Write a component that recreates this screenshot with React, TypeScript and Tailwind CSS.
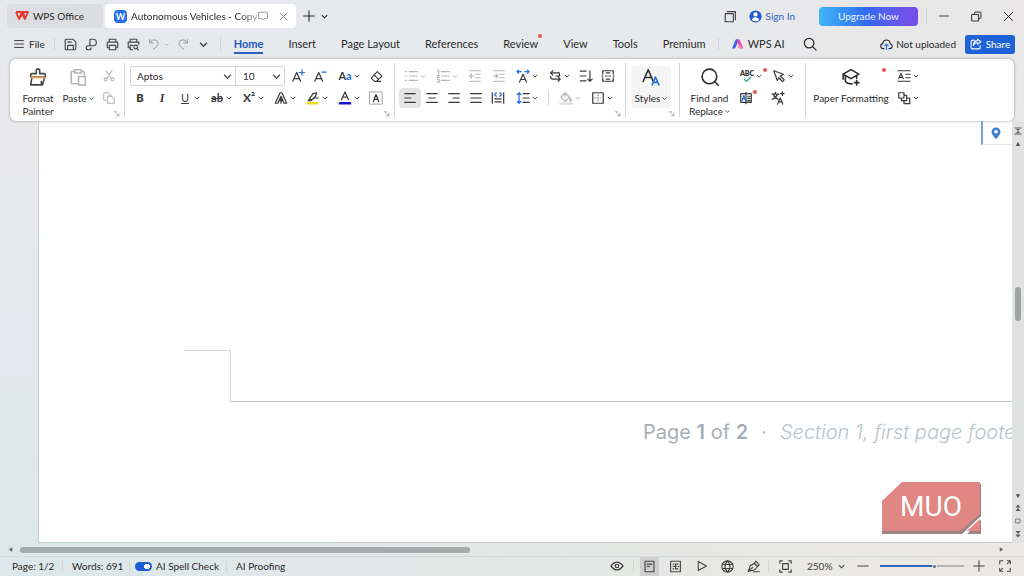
import type { ReactNode } from "react";
import { useState } from "react";

type GlyphProps = {
  d?: string;
  className?: string;
  children?: ReactNode;
};

// All toolbar drawings share a 16x16 grid.
function Glyph({ d, className = "size-[14px]", children }: GlyphProps) {
  return (
    <svg
      viewBox="0 0 16 16"
      aria-hidden="true"
      className={`shrink-0 ${className}`}
      fill="none"
      stroke="currentColor"
      strokeWidth="1.4"
      strokeLinecap="round"
      strokeLinejoin="round"
    >
      {d ? <path d={d} /> : null}
      {children}
    </svg>
  );
}

function Chevron({ className = "size-[6px]" }: { className?: string }) {
  return (
    <svg viewBox="0 0 8 8" aria-hidden="true" className={`shrink-0 ${className}`} fill="none" stroke="currentColor" strokeWidth="1.3">
      <path d="M1 2.5 4 5.5 7 2.5" />
    </svg>
  );
}

// Solid marks for the scroll bars.
function Arrow({ d, className = "size-[7px]" }: { d: string; className?: string }) {
  return (
    <svg viewBox="0 0 16 16" aria-hidden="true" className={`shrink-0 ${className}`} fill="currentColor">
      <path d={d} />
    </svg>
  );
}

type ToolProps = {
  label: string;
  drop?: boolean;
  active?: boolean;
  muted?: boolean;
  dot?: boolean;
  children: ReactNode;
};

function Tool({ label, drop, active, muted, dot, children }: ToolProps) {
  return (
    <button
      type="button"
      aria-label={label}
      aria-pressed={active}
      className={`relative flex h-5 shrink-0 items-center justify-center gap-[2px] rounded ${drop ? "w-8" : "w-[22px]"} ${active ? "bg-[#e4e4e4]" : ""} ${muted ? "text-[#b5b5b5]" : "text-[#3a3a3a]"}`}
    >
      {children}
      {drop ? <Chevron /> : null}
      {dot ? <RedDot className="right-0 top-[2px]" /> : null}
    </button>
  );
}

function RedDot({ className }: { className: string }) {
  return <span className={`absolute size-1 rounded-full bg-[#e8554d] ${className}`} />;
}

function Divider({ className = "h-3" }: { className?: string }) {
  return <span className={`w-px shrink-0 bg-[#d5d6d9] ${className}`} />;
}

function Launcher({ label }: { label: string }) {
  return (
    <button type="button" aria-label={label} className="absolute bottom-1 right-1 text-[#777]">
      <Glyph className="size-[6px]" d="M2 2 13 13M13 6V13H6M2 2H7" />
    </button>
  );
}

function TitleBar() {
  return (
    <header className="flex h-8 items-end justify-between pr-[10px]">
      <div className="flex h-7 items-stretch pl-[7px]">
        <button type="button" className="mb-1 flex w-24 items-center gap-1 rounded bg-[#dcdde1] pl-2">
          <svg viewBox="0 0 14 10" className="h-[10px] w-[14px]" fill="none" stroke="#e5392f" strokeWidth="1.8" strokeLinejoin="round" aria-hidden="true">
            <path d="M1 1H8L10 8 13 1H7L4 8 1 1" />
            <path d="M4 8 7 3 10 8" />
          </svg>
          WPS Office
        </button>
        <div className="ml-[2px] mb-1 flex w-[191px] items-center rounded bg-white pl-[9px]">
          <span className="flex size-[13px] shrink-0 items-center justify-center rounded-sm bg-[#2670ec] text-[9px] font-bold leading-none text-white">W</span>
          <span className="ml-1 whitespace-nowrap bg-linear-to-r from-[#222] from-85% to-[#aaa] bg-clip-text text-transparent">
            Autonomous Vehicles - Copy
          </span>
          <Glyph className="ml-auto size-[10px] text-[#8b8b8b]" d="M2 2H14Q15 2 15 3V11Q15 12 14 12H11L8 14 5 12H2Q1 12 1 11V3Q1 2 2 2Z" />
          <button type="button" aria-label="Close tab" className="ml-[10px] mr-[7px] text-[#8b8b8b]">
            <Glyph className="size-[11px]" d="M3 3 13 13M13 3 3 13" />
          </button>
        </div>
        <button type="button" aria-label="New tab" className="mb-1 ml-[3px] pl-1">
          <Glyph className="size-3" d="M8 1V15M1 8H15" />
        </button>
        <button type="button" aria-label="Tab list" className="mb-1 ml-[6px]">
          <Chevron className="size-[7px]" />
        </button>
      </div>
      <div className="flex h-8 items-center">
        <button type="button" aria-label="Windows" className="text-[#444]">
          <Glyph className="size-[13px]" d="M1.500 4.500H11.500V14.500H1.500ZM4 2H14V12" />
        </button>
        <button type="button" className="ml-3 flex items-center gap-1 text-[#2862bd]">
          <svg viewBox="0 0 16 16" className="size-[13px]" aria-hidden="true">
            <circle cx="8" cy="8" r="7.500" fill="#1f59d0" />
            <circle cx="8" cy="5.500" r="2.600" fill="white" />
            <path d="M3.500 12.500Q4 9 8 9T12.500 12.500Q8 15 3.500 12.500Z" fill="white" />
          </svg>
          Sign In
        </button>
        <button type="button" className="ml-6 h-[19px] w-[99px] rounded bg-linear-to-r from-[#41b4f8] via-[#3267ee] to-[#7b4bea] text-[#e9f2ff]">
          Upgrade Now
        </button>
        <Divider className="ml-2 h-4" />
        <button type="button" aria-label="Minimize" className="ml-3">
          <Glyph className="size-[10px]" d="M1 8H15" />
        </button>
        <button type="button" aria-label="Restore" className="ml-[22px]">
          <Glyph className="size-[11px]" d="M1.500 5H11V14.500H1.500ZM5 5V3Q5 1.500 6.500 1.500H13Q14.500 1.500 14.500 3V9Q14.500 11 13 11H11" />
        </button>
        <button type="button" aria-label="Close" className="ml-[21px]">
          <Glyph className="size-[11px]" d="M2 2 14 14M14 2 2 14" />
        </button>
      </div>
    </header>
  );
}

const MENU = ["Home", "Insert", "Page Layout", "References", "Review", "View", "Tools", "Premium"];

function MenuBar() {
  return (
    <nav className="flex h-[27px] items-center pl-[14px] pr-[9px] pb-[3px]">
      <button type="button" className="flex items-center gap-[5px]">
        <Glyph className="size-[10px]" d="M1 2.500H15M1 8H15M1 13.500H15" />
        File
      </button>
      <Divider className="ml-[9px] h-3" />
      <div className="ml-[9px] flex items-center gap-2 text-[#444]">
        <button type="button" aria-label="Save">
          <Glyph className="size-[13px]" d="M1.500 3Q1.500 1.500 3 1.500H11L14.500 5V13Q14.500 14.500 13 14.500H3Q1.500 14.500 1.500 13ZM4.500 14V9H11.500V14M4.500 5H9" />
        </button>
        <button type="button" aria-label="Export to PDF">
          <Glyph className="size-[13px]" d="M6 9V3Q6 1.500 7.500 1.500H10Q14 1.500 14 5.500T10 9.500H4Q1.500 9.500 1.500 12T4 14.500H5Q7.500 14.500 7.500 12" />
        </button>
        <button type="button" aria-label="Print">
          <Glyph className="size-[13px]" d="M4 5V1.500H12V5M4 12H2Q1.500 12 1.500 11V6Q1.500 5 2.500 5H13.500Q14.500 5 14.500 6V11Q14.500 12 13.500 12H12M4 9H12V14.500H4Z" />
        </button>
        <button type="button" aria-label="Print preview">
          <Glyph className="size-[13px]" d="M4 5V1.500H12V5M4 12H1.500V5H14.500V8M4 9V14.500H7M4 9H7M14 14.500 12.500 13M13 11A2.300 2.300 0 1 1 8.400 11 2.300 2.300 0 0 1 13 11" />
        </button>
        <button type="button" aria-label="Undo" className="flex items-center gap-1 text-[#a6a8ac]">
          <Glyph className="size-3" d="M2 2V6.500H7M2 6.500Q5 2 9 2.500 14 3.500 13 8.500 12 12 7 15" />
          <Chevron className="size-[5px]" />
        </button>
        <button type="button" aria-label="Redo" className="text-[#a6a8ac]">
          <Glyph className="size-3" d="M14 2V6.500H9M14 6.500Q11 2 7 2.500 2 3.500 3 8.500 4 12 9 15" />
        </button>
        <button type="button" aria-label="More quick actions" className="ml-[2px]">
          <Chevron className="size-[9px]" />
        </button>
      </div>
      <Divider className="ml-3 h-4" />
      <div className="ml-[13px] flex gap-[25px] text-[11px]">
        {MENU.map((item) => (
          <button
            key={item}
            type="button"
            className={`relative h-5 whitespace-nowrap ${item === "Home" ? "border-b-2 border-[#2862c4] pt-[2px] font-bold text-[#2058c0]" : ""}`}
          >
            {item}
            {item === "Review" ? <RedDot className="-right-1 top-0" /> : null}
          </button>
        ))}
      </div>
      <Divider className="ml-3 h-3" />
      <button type="button" className="ml-[13px] flex items-center gap-1 whitespace-nowrap text-[11px]">
        <svg viewBox="0 0 12 10" className="h-[10px] w-3" aria-hidden="true">
          <path d="M0 9.500 3.500 1Q4 0 5.500 .5H7L3 9.500Z" fill="#3a5cf0" />
          <path d="M5.500 .5H7.500L11.500 9.500H9L5 3Z" fill="#e64ca5" />
          <path d="M5 6.500H9L10 9.500H7Z" fill="#f98bb8" />
        </svg>
        WPS AI
      </button>
      <button type="button" aria-label="Search" className="ml-[18px]">
        <Glyph className="size-[14px]" d="M12.500 7A5.500 5.500 0 1 1 1.500 7 5.500 5.500 0 0 1 12.500 7M11 11 15 15" />
      </button>
      <div className="ml-auto flex items-center gap-[9px]">
        <button type="button" className="flex items-center gap-[3px] whitespace-nowrap">
          <Glyph className="size-[13px]" d="M5 13H4Q1 13 1 10T3.500 7Q4 2.500 8 2.500T12.500 7Q15 7.500 15 10T12 13H11">
            <path d="M8 14V7.500M6 9.500 8 7.500 10 9.500" stroke="#2670ec" />
          </Glyph>
          Not uploaded
        </button>
        <button type="button" className="flex h-[19px] w-[50px] items-center justify-center gap-1 rounded-[3px] bg-[#1d62d6] text-white">
          <Glyph className="size-3" d="M6 3H3Q1.500 3 1.500 4.500V13Q1.500 14.500 3 14.500H12Q13.500 14.500 13.500 13V10M10 1.500 14.500 5 10 8.500V6.500Q6 6 4.500 10 4.500 4 10 3.500Z" />
          Share
        </button>
      </div>
    </nav>
  );
}

const LINES_LEFT = "M2 3H14M2 8H9M2 13H14";
const LINES_CENTER = "M2 3H14M4.500 8H11.500M2 13H14";
const LINES_RIGHT = "M2 3H14M7 8H14M2 13H14";
const LINES_JUSTIFY = "M2 3H14M2 8H14M2 13H14";

function ClipboardGroup() {
  return (
    <section aria-label="Clipboard" className="relative flex w-[114px] shrink-0 pl-2 pt-[7px]">
      <button type="button" className="flex w-10 flex-col items-center pt-[2px] leading-[13px]">
        <Glyph className="mb-[6px] size-[18px] text-[#444]" d="M6.500 5V2Q6.500 1 7.500 1H8.500Q9.500 1 9.500 2V5H13.500Q14.500 5 14.500 6V8H1.500V6Q1.500 5 2.500 5ZM2.500 9 1.500 15H12L13.500 9.500M11 15V12">
          <path d="M2 8.300H14" stroke="#ee9a45" />
        </Glyph>
        Format Painter
      </button>
      <button type="button" className="flex w-10 flex-col items-center pt-[2px] leading-[13px]">
        <Glyph className="mb-[6px] size-[18px] text-[#b5b5b5]" d="M5 3H3Q2 3 2 4V13Q2 14 3 14H7M11 3H12.500Q13.500 3 13.500 4V6M5 1.500H11V4.500H5ZM8.500 7.500H14.500V15H8.500Z" />
        <span className="flex items-center gap-[2px]">
          Paste
          <Chevron className="size-[5px]" />
        </span>
      </button>
      <div className="flex flex-col gap-[2px]">
        <Tool label="Cut" muted>
          <Glyph className="size-3" d="M4 1 11 11M12 1 5 11M5.500 12.500A2 2 0 1 1 1.500 12.500 2 2 0 0 1 5.500 12.500M14.500 12.500A2 2 0 1 1 10.500 12.500 2 2 0 0 1 14.500 12.500" />
        </Tool>
        <Tool label="Copy" muted>
          <Glyph className="size-3" d="M5 11H2Q1 11 1 10V2Q1 1 2 1H7L10 4V5M6 5.500H11.500L15 9V15H6Z" />
        </Tool>
      </div>
      <Launcher label="Clipboard settings" />
    </section>
  );
}

function FontGroup() {
  return (
    <section aria-label="Font" className="relative flex w-[269px] shrink-0 flex-col gap-[2px] pt-[7px]">
      <div className="flex items-center pl-[5px]">
        <label className="relative flex items-center">
          <span className="sr-only">Font name</span>
          <select className="h-5 w-[106px] appearance-none rounded-l-[3px] border border-[#d4d4d4] bg-white pl-[6px]">
            <option>Aptos</option>
          </select>
          <Chevron className="pointer-events-none absolute right-1 size-[9px] text-[#555]" />
        </label>
        <label className="relative -ml-px flex items-center">
          <span className="sr-only">Font size</span>
          <select className="h-5 w-[50px] appearance-none rounded-r-[3px] border border-[#d4d4d4] bg-white pl-[7px]">
            <option>10</option>
          </select>
          <Chevron className="pointer-events-none absolute right-1 size-[9px] text-[#555]" />
        </label>
        <span className="w-[2px]" />
        <Tool label="Increase font size">
          <Glyph d="M2 14 6.500 4 11 14M3.500 11H9.500">
            <path d="M12.500 1V7M9.500 4H15.500" stroke="#2670d8" />
          </Glyph>
        </Tool>
        <Tool label="Decrease font size">
          <Glyph d="M2 14 6.500 4 11 14M3.500 11H9.500">
            <path d="M10 3.500H15" stroke="#2670d8" />
          </Glyph>
        </Tool>
        <span className="w-[2px]" />
        <Tool label="Change case" drop>
          <span className="text-[11px] font-bold">
            A<span className="text-[#2670d8]">a</span>
          </span>
        </Tool>
        <Tool label="Clear formatting">
          <Glyph className="size-[13px]" d="M9 2 14.500 7.500 8 14H5.500L1.500 10ZM5 6 10.500 11.500M5.500 14H13" />
        </Tool>
      </div>
      <div className="flex items-center pl-1">
        <Tool label="Bold">
          <span className="text-[11px] font-extrabold">B</span>
        </Tool>
        <Tool label="Italic">
          <span className="font-['Liberation_Serif',serif] text-[12px] font-bold italic">I</span>
        </Tool>
        <Tool label="Underline" drop>
          <span className="w-[14px] text-[11px] underline">U</span>
        </Tool>
        <Tool label="Strikethrough" drop>
          <span className="w-[14px] text-[11px] font-bold line-through">ab</span>
        </Tool>
        <Tool label="Superscript" drop>
          <span className="w-[14px] text-[12px] font-bold leading-none">X²</span>
        </Tool>
        <Tool label="Text effects" drop>
          <Glyph d="M1.500 14 7 2H9L14.500 14H11.500L8 6 4.500 14ZM6 11H10M8 7V14" />
        </Tool>
        <Tool label="Highlight color" drop>
          <Glyph d="M4 9 8 3 12 2 11 6 7 10ZM4 9 2.500 11H6L7 9.500M9 8H14">
            <path d="M1 14H14" stroke="#e6de1c" strokeWidth="3" strokeLinecap="butt" />
          </Glyph>
        </Tool>
        <Tool label="Font color" drop>
          <Glyph d="M4 10 8 1 12 10M5.500 7H10.500">
            <path d="M1 14H15" stroke="#1414d2" strokeWidth="3" strokeLinecap="butt" />
          </Glyph>
        </Tool>
        <Tool label="Character border">
          <Glyph d="M5 12 8 4 11 12M6 9.500H10">
            <path d="M1 1H15V15H1Z" stroke="#999" strokeWidth="1" />
          </Glyph>
        </Tool>
      </div>
      <Launcher label="Font settings" />
    </section>
  );
}

function ParagraphGroup() {
  return (
    <section aria-label="Paragraph" className="relative flex w-[230px] shrink-0 flex-col gap-[2px] pl-1 pt-[7px]">
      <div className="flex items-center">
        <Tool label="Bullets" drop muted>
          <Glyph d="M2 3H3M2 8H3M2 13H3M6 3H15M6 8H15M6 13H15" />
        </Tool>
        <Tool label="Numbering" drop muted>
          <Glyph d="M2 1.500H3V5M1.500 7H3.500L1.500 9.500H3.500M1.500 12H3.500V15H1.500M6 3H15M6 8H15M6 13H15" />
        </Tool>
        <div className="flex w-12 justify-around">
          <Tool label="Decrease indent" muted>
            <Glyph d="M2 2H14M9 6H14M9 10H14M2 14H14M7 8H2M4 6 2 8 4 10" />
          </Tool>
          <Tool label="Increase indent" muted>
            <Glyph d="M2 2H14M9 6H14M9 10H14M2 14H14M1.500 8H6.500M4.500 6 6.500 8 4.500 10" />
          </Tool>
        </div>
        <Tool label="Character scaling" drop>
          <Glyph d="M4 15 8 6 12 15M5.500 12H10.500">
            <path d="M1 3H6M10 3H15M3 1 1 3 3 5M13 1 15 3 13 5" stroke="#2670d8" />
          </Glyph>
        </Tool>
        <Tool label="Text direction" drop>
          <Glyph d="M13 4.500H3M5.500 2 3 4.500 5.500 7M3 8.500Q3 11.500 6 11.500H14M11.500 9 14 11.500 11.500 14M13 4.500V8H9" />
        </Tool>
        <Tool label="Sort">
          <Glyph d="M1.500 2.500H8M1.500 8H8M1.500 13.500H8M12.500 2V14M10 11.500 12.500 14 15 11.500" />
        </Tool>
        <Tool label="Show marks">
          <Glyph d="M2 6V2H14V6M2 10V14H14V10M1 8H2M5 8H7M9 8H11M14 8H15M6 4.500H10M6 11.500H10" />
        </Tool>
      </div>
      <div className="flex items-center">
        <Tool label="Align left" active>
          <Glyph d={LINES_LEFT} />
        </Tool>
        <Tool label="Align center">
          <Glyph d={LINES_CENTER} />
        </Tool>
        <Tool label="Align right">
          <Glyph d={LINES_RIGHT} />
        </Tool>
        <Tool label="Justify">
          <Glyph d={LINES_JUSTIFY} />
        </Tool>
        <Tool label="Distribute">
          <Glyph d="M1.500 2V14M14.500 2V14M4.500 9H11.500M4.500 12.500H11.500">
            <path d="M6 2 4 4 6 6M10 2 12 4 10 6" stroke="#2670d8" />
          </Glyph>
        </Tool>
        <span className="w-[2px]" />
        <Tool label="Line spacing" drop>
          <Glyph d="M8 3H15M8 8H15M8 13H15">
            <path d="M3.500 2V14M1.500 4 3.500 2 5.500 4M1.500 12 3.500 14 5.500 12" stroke="#2670d8" />
          </Glyph>
        </Tool>
        <Divider className="mx-[5px] h-4" />
        <Tool label="Shading" drop muted>
          <Glyph d="M7 2 12 7 7 12 2 7ZM7 2V6M13 8Q15 11 13.500 11.500T13 8">
            <path d="M1.500 14.500H14.500" stroke="#dedede" strokeWidth="2.500" />
          </Glyph>
        </Tool>
        <Tool label="Borders" drop>
          <Glyph d="M2 2H14V14H2Z">
            <path d="M8 4V12M4 8H12" stroke="#999" strokeDasharray="1 2" />
          </Glyph>
        </Tool>
      </div>
      <Launcher label="Paragraph settings" />
    </section>
  );
}

function Ribbon() {
  return (
    <div className="relative z-10 mx-[10px] flex min-h-[62px] items-stretch overflow-hidden rounded-md bg-white shadow-[0_0_3px_#9a9a9a]">
      <ClipboardGroup />
      <Divider className="my-1" />
      <FontGroup />
      <Divider className="my-1" />
      <ParagraphGroup />
      <Divider className="my-1" />
      <section aria-label="Styles" className="relative w-[53px] shrink-0 pl-[5px] pt-[7px]">
        <button type="button" className="flex h-[42px] w-10 flex-col items-center rounded bg-[#f5f5f5] pt-[2px] leading-[13px]">
          <Glyph className="mb-[6px] size-[18px]" d="M1 12 5.500 1.500 10 12M2.500 8.500H8.500">
            <path d="M9 15 12 8 15 15M10 12.800H14" stroke="#2670d8" />
          </Glyph>
          <span className="flex items-center gap-[2px]">
            Styles
            <Chevron className="size-[5px]" />
          </span>
        </button>
        <Launcher label="Style settings" />
      </section>
      <Divider className="my-1" />
      <section aria-label="Editing" className="flex w-[125px] shrink-0 pl-1 pt-[7px]">
        <button type="button" className="flex w-[51px] flex-col items-center whitespace-nowrap pt-[2px] leading-[13px]">
          <Glyph className="mb-[6px] size-[18px]" d="M14 7.500A6.500 6.500 0 1 1 1 7.500 6.500 6.500 0 0 1 14 7.500M12.500 12.500 15.500 15.500" />
          Find and
          <span className="flex items-center gap-[2px]">
            Replace
            <Chevron className="size-[5px]" />
          </span>
        </button>
        <div className="flex flex-col gap-[2px]">
          <div className="flex">
            <Tool label="Spell check" drop dot>
              <svg viewBox="0 0 14 14" className="size-[14px] shrink-0" aria-hidden="true">
                <text x="7" y="6.500" textAnchor="middle" fontSize="7" fontWeight="800" fill="#333">ABC</text>
                <path d="M4 10 6.500 12.500 11 8" fill="none" stroke="#2ba36c" strokeWidth="1.200" />
              </svg>
            </Tool>
            <Tool label="Select" drop>
              <Glyph d="M2 2 13 6 9.500 8 14 12.500 12 14.500 8 10 6 13Z" />
            </Tool>
          </div>
          <div className="flex gap-[10px]">
            <Tool label="Translate document" dot>
              <Glyph d="M8 3H2V13H8M8 1.500V14.500M8 3H14V13H8M10 6H12.500M10 8.500H12.500M10 11H12.500">
                <path d="M3.500 11 5.500 5 7.500 11M4 9H7" stroke="#2670d8" />
              </Glyph>
            </Tool>
            <Tool label="Translate">
              <Glyph d="M1 3.500H9M5 1.500V3.500M2.500 3.500Q4 8 8 9.500M7.500 3.500Q6 8 1.500 9.500M7.500 15 10.500 8 13.500 15M8.500 12.500H12.500M13 1V5M11 3H15" />
            </Tool>
          </div>
        </div>
      </section>
      <Divider className="my-1" />
      <section aria-label="Paper formatting" className="flex shrink-0 pl-1 pt-[7px]">
        <button type="button" className="relative flex w-[82px] flex-col items-center whitespace-nowrap pt-[2px] leading-[13px]">
          <Glyph className="mb-[6px] size-[18px]" d="M8 1.500 15 5.500 8 9.500 1 5.500ZM3 7.500V12Q5 14.500 9 14M13 7V9M1 5.500V10M13 11V15M11 13H15" />
          Paper Formatting
          <RedDot className="right-[6px] top-[2px]" />
        </button>
        <div className="flex flex-col gap-[2px]">
          <Tool label="Paragraph layout" drop>
            <Glyph d="M1 2H15M1 14H15M2 11 4.500 5 7 11M3 9.500H6M10 6H15M10 10H15" />
          </Tool>
          <Tool label="Arrange" drop>
            <Glyph d="M2 2H8V8H2ZM8 5H11V11H5V8M11 8H14.500V14.500H8V11" />
          </Tool>
        </div>
      </section>
    </div>
  );
}

function VerticalScroll() {
  return (
    <div className="flex w-3 shrink-0 flex-col items-center bg-[#e0e2e1] pb-[5px] pt-[5px] text-[#555]">
      <Arrow className="mt-px size-2" d="M1 1H15V3H1ZM4 4H12L8 8ZM8 8 12 12H4ZM1 13H15V15H1Z" />
      <Arrow className="mt-[6px] size-[6px]" d="M8 2 14 13H2Z" />
      <span className="grow-[9]" />
      <span className="h-[34px] w-[6px] rounded-full bg-[#9fa3a3]" />
      <span className="grow-[11]" />
      <div className="flex flex-col items-center gap-[5px]">
        <Arrow className="size-[6px]" d="M8 14 14 3H2Z" />
        <Arrow className="size-2" d="M8 1 13 7H3ZM8 8 13 14H3Z" />
        <Glyph className="size-2" d="M4 4H12V12H4Z" />
        <Arrow className="size-2" d="M3 2H13L8 8ZM3 9H13L8 15Z" />
      </div>
    </div>
  );
}

function Workspace() {
  return (
    <main className="flex min-h-[300px] flex-1 bg-linear-to-b from-[#e9e8ea] via-[#e2e8ef] to-[#dce9eb]">
      <article className="relative ml-[38px] flex-1 overflow-hidden border-b border-l border-[#c6cbcb] bg-white pt-[229px]">
        <div className="ml-[145px] h-[51px] w-[47px] border-r border-t border-[#d6d8d8]" />
        <div className="ml-[191px] border-t border-[#c3c6c6]" />
        <p className="ml-[604px] mt-[15px] whitespace-nowrap font-['Inter'] text-[20px] leading-[30px] text-[#a9aeb3]">
          Page <b className="font-semibold">1</b> of <b className="font-semibold">2</b>
          <span className="mx-[13px] text-[#bcc3c8]">·</span>
          <i className="font-light text-[#b9c3c9]">Section 1, first page footer</i>
        </p>
        <div className="absolute right-0 top-0 flex h-6 w-[31px] items-center justify-center border-b border-l-2 border-b-[#e6e6e6] border-l-[#78a3dd] pr-1">
          <svg viewBox="0 0 10 12" className="h-3 w-[10px]" aria-hidden="true">
            <path d="M5 12Q.5 7.500 .5 5A4.500 4.500 0 0 1 9.500 5Q9.500 7.500 5 12Z" fill="#3f80cf" />
            <circle cx="5" cy="4.800" r="1.800" fill="white" />
          </svg>
        </div>
        <svg viewBox="0 0 102 54" role="img" aria-label="MUO" className="absolute bottom-[7px] right-[29px] h-[54px] w-[102px]">
          <g fill="#9c8583">
            <path d="M1 22 21 3H100V35L81 53H1Z" />
            <path d="M100 39V53H86Z" />
          </g>
          <g fill="#e08683">
            <path d="M1 20 21 1H99V33L79 50H1Z" />
            <path d="M99 38V50H86Z" />
          </g>
          <text x="50" y="35" textAnchor="middle" className="fill-white font-['Roboto'] text-[28px]">MUO</text>
        </svg>
      </article>
      <VerticalScroll />
    </main>
  );
}

function HorizontalScroll() {
  return (
    <div className="flex h-[13px] items-center pl-[7px] pr-[19px] text-[#666]">
      <Arrow d="M12 3V13L4 8Z" />
      <div className="ml-[6px] flex-1">
        <div className="h-[6px] w-[46%] rounded-full bg-[#a3abab]" />
      </div>
      <Arrow d="M4 3V13L12 8Z" />
    </div>
  );
}

function StatusBar() {
  const [zoom, setZoom] = useState(66);

  return (
    <footer className="flex h-5 items-center whitespace-nowrap border-t border-[#d3d8d8] px-3 pb-px">
      <button type="button" className="w-10 text-left">Page: 1/2</button>
      <Divider className="ml-[10px] h-3" />
      <button type="button" className="ml-[9px] w-12 text-left">Words: 691</button>
      <Divider className="ml-[9px] h-3" />
      <label className="ml-[5px] flex items-center gap-1">
        <input
          type="checkbox"
          role="switch"
          defaultChecked
          className="h-[9px] w-[17px] appearance-none rounded-full bg-[#999] bg-[radial-gradient(circle_at_4px_50%,white_3px,transparent_3px)] checked:bg-[#1d5fd2] checked:bg-[radial-gradient(circle_at_12px_50%,white_3px,transparent_3px)]"
        />
        AI Spell Check
      </label>
      <Divider className="ml-[7px] h-3" />
      <button type="button" className="ml-[9px]">AI Proofing</button>

      <div className="ml-auto flex items-center text-[#444]">
        <button type="button" aria-label="Eye protection">
          <Glyph d="M1 8Q8-1 15 8 8 17 1 8ZM10 8A2 2 0 1 1 6 8 2 2 0 0 1 10 8" />
        </button>
        <Divider className="ml-[9px] mr-[6px] h-3" />
        <div className="flex gap-[7px]">
          <button type="button" aria-label="Print layout" aria-pressed="true" className="flex h-[19px] w-[19px] items-center justify-center bg-[#cfcfcf]">
            <Glyph className="size-[13px]" d="M2.500 1.500H13.500V14.500H2.500ZM5 5H11M5 8H8" />
          </button>
          <button type="button" aria-label="Outline" className="flex w-[19px] items-center justify-center">
            <Glyph className="size-[13px]" d="M2 1.500H14V14.500H2ZM5 5H6M8 5H11M5 8H9M11 8H12M5 11H6M8 11H11M8 5V11" />
          </button>
          <button type="button" aria-label="Read mode" className="flex w-[19px] items-center justify-center">
            <Glyph className="size-3" d="M3 2 14 8 3 14Z" />
          </button>
          <button type="button" aria-label="Web layout" className="flex w-[19px] items-center justify-center">
            <Glyph className="size-[13px]" d="M15 8A7 7 0 1 1 1 8 7 7 0 0 1 15 8M2 5.500H14M2 10.500H14M8 1Q2 8 8 15 14 8 8 1" />
          </button>
          <button type="button" aria-label="Writing mode" className="flex w-[19px] items-center justify-center">
            <Glyph className="size-[13px]" d="M1.500 14 4 7 9 4 13 8 9.500 12ZM1.500 14 7 9M9 4 11 1.500 15 6 13 8M8 14.500H15" />
          </button>
        </div>
        <Divider className="ml-[5px] mr-[10px] h-3" />
        <button type="button" aria-label="Fit page">
          <Glyph className="size-[13px]" d="M1 4V1H4M12 1H15V4M15 12V15H12M4 15H1V12M4.500 4.500H11.500V11.500H4.500Z" />
        </button>
        <button type="button" className="ml-[15px] flex items-center gap-[7px]">
          <span className="w-6 text-left">250%</span>
          <Chevron className="size-[7px]" />
        </button>
        <button type="button" aria-label="Zoom out" className="ml-3">
          <Glyph className="size-3" d="M1 8H15" />
        </button>
        <input
          type="range"
          aria-label="Zoom"
          value={zoom}
          onChange={(e) => setZoom(Number(e.target.value))}
          style={{ backgroundImage: `linear-gradient(to right, #2f66c4 ${zoom - 2}%, #b5b5b5 ${zoom - 2}%)` }}
          className="ml-[11px] h-[2px] w-[84px] appearance-none [&::-webkit-slider-thumb]:size-[5px] [&::-webkit-slider-thumb]:appearance-none [&::-webkit-slider-thumb]:rounded-full [&::-webkit-slider-thumb]:border [&::-webkit-slider-thumb]:border-white [&::-webkit-slider-thumb]:bg-[#666]"
        />
        <button type="button" aria-label="Zoom in" className="ml-[9px]">
          <Glyph className="size-3" d="M8 1V15M1 8H15" />
        </button>
        <button type="button" aria-label="Full screen" className="ml-[14px] mr-px">
          <Glyph className="size-3" d="M1 5V1H5M11 1H15V5M15 11V15H11M5 15H1V11M15 1 11 5M1 15 5 11" />
        </button>
      </div>
    </footer>
  );
}

export default function App() {
  return (
    <div className="flex min-h-screen flex-col bg-[linear-gradient(100deg,#e6e8ec_0%,#e7eaed_50%,#e9e6e6_100%)] font-['Lato',sans-serif] text-[10px] leading-[14px] text-[#2b2b2b]">
      <TitleBar />
      <MenuBar />
      <Ribbon />
      <div className="flex flex-1 flex-col bg-linear-to-r from-[#dbe7ea] to-[#ece8e2]">
        <Workspace />
        <HorizontalScroll />
        <StatusBar />
      </div>
    </div>
  );
}
